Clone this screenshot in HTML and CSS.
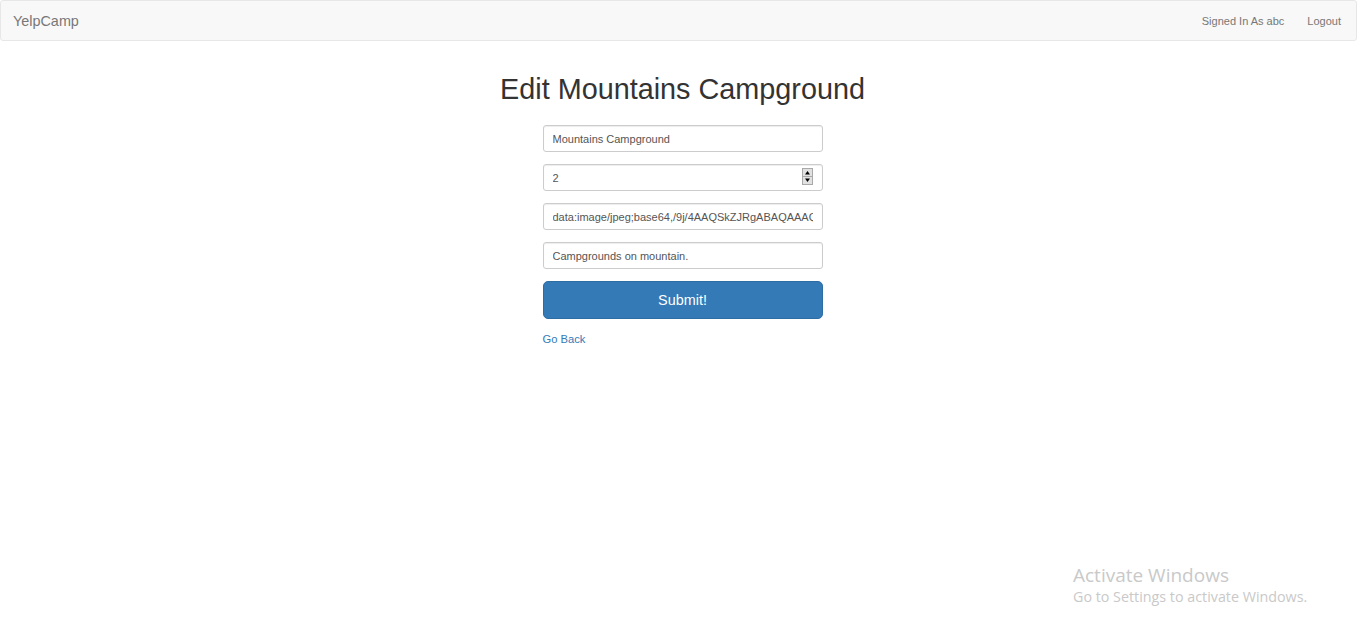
FILE: index.html
```html
<!DOCTYPE html>
<html>
<head>
<meta charset="utf-8">
<title>YelpCamp</title>
<link rel="stylesheet" href="styles.css">
</head>
<body>
<nav class="navbar">
  <a class="brand" href="#">YelpCamp</a>
  <div class="nav-right">
    <a class="nav-link" href="#">Signed In As abc</a>
    <a class="nav-link" href="#">Logout</a>
  </div>
</nav>
<main class="main">
  <div class="page">
    <h1 class="title">Edit Mountains Campground</h1>
    <form class="form">
      <div class="group"><input class="field" type="text" value="Mountains Campground"></div>
      <div class="group spin-wrap">
        <input class="field" type="text" value="2">
        <span class="spinner">
          <svg width="11" height="17" viewBox="0 0 11 17">
            <rect x="0.5" y="0.5" width="10" height="16" fill="#f0f0f0" stroke="#a9a9a9"/>
            <rect x="1" y="1" width="9" height="7" fill="#e1e1e1"/>
            <rect x="1" y="9" width="9" height="7" fill="#e1e1e1"/>
            <line x1="0.5" y1="8.5" x2="10.5" y2="8.5" stroke="#a9a9a9"/>
            <polygon points="3,6.5 8,6.5 5.5,3" fill="#000"/>
            <polygon points="3,10.5 8,10.5 5.5,14" fill="#000"/>
          </svg>
        </span>
      </div>
      <div class="group"><input class="field" type="text" value="data:image/jpeg;base64,/9j/4AAQSkZJRgABAQAAAQ"></div>
      <div class="group"><input class="field" type="text" value="Campgrounds on mountain."></div>
      <div class="group"><button class="submit" type="button">Submit!</button></div>
      <a class="back" href="#">Go Back</a>
    </form>
  </div>
</main>
<div class="watermark">
  <div class="wm-title">Activate Windows</div>
  <div class="wm-sub">Go to Settings to activate Windows.</div>
</div>
</body>
</html>
```
FILE: styles.css
```css
html, body {
  margin: 0;
  padding: 0;
  background: #fff;
  font-family: "Liberation Sans", Arial, sans-serif;
  font-size: 11.2px;
  color: #333;
}
.navbar {
  display: flex;
  align-items: center;
  justify-content: space-between;
  height: 39px;
  background: #f8f8f8;
  border: 1px solid #e7e7e7;
  border-radius: 3px;
  padding: 0 4px 0 12px;
}
.brand {
  font-size: 14.4px;
  color: #777;
  text-decoration: none;
}
.nav-right {
  display: flex;
}
.nav-link {
  color: #777;
  text-decoration: none;
  padding: 0 11px 0 12px;
  font-size: 11px;
}
.main {
  padding-left: 8px;
}
.page {
  width: 280px;
  margin: 0 auto;
}
.title {
  font-size: 28.8px;
  font-weight: 500;
  line-height: 32px;
  margin: 32px -100px 20px;
  text-align: center;
  color: #333;
}
.form {
  display: flex;
  flex-direction: column;
}
.group {
  margin-bottom: 12px;
}
.spin-wrap {
  position: relative;
}
.spinner {
  position: absolute;
  right: 10px;
  top: 4px;
  width: 11px;
  height: 17px;
  line-height: 0;
}
.field {
  box-sizing: border-box;
  display: block;
  width: 100%;
  height: 27px;
  padding: 4px 9px;
  font-family: "Liberation Sans", Arial, sans-serif;
  font-size: 11px;
  color: #555;
  background: #fff;
  border: 1px solid #ccc;
  border-radius: 3px;
  box-shadow: inset 0 1px 1px rgba(0,0,0,.075);
  outline: none;
}
.submit {
  display: block;
  width: 100%;
  height: 38px;
  font-family: "Liberation Sans", Arial, sans-serif;
  font-size: 14.4px;
  color: #fff;
  background: #337ab7;
  border: 1px solid #2e6da4;
  border-radius: 5px;
  cursor: pointer;
}
.back {
  color: #337ab7;
  text-decoration: none;
  font-size: 11.2px;
  margin-top: 2px;
}
.watermark {
  position: absolute;
  left: 1073px;
  top: 563px;
  color: #c9c9c9;
  font-family: "Open Sans", "Noto Sans", sans-serif;
}
.wm-title {
  font-size: 19px;
  line-height: 24px;
}
.wm-sub {
  font-size: 14.3px;
  line-height: 19px;
}
```
